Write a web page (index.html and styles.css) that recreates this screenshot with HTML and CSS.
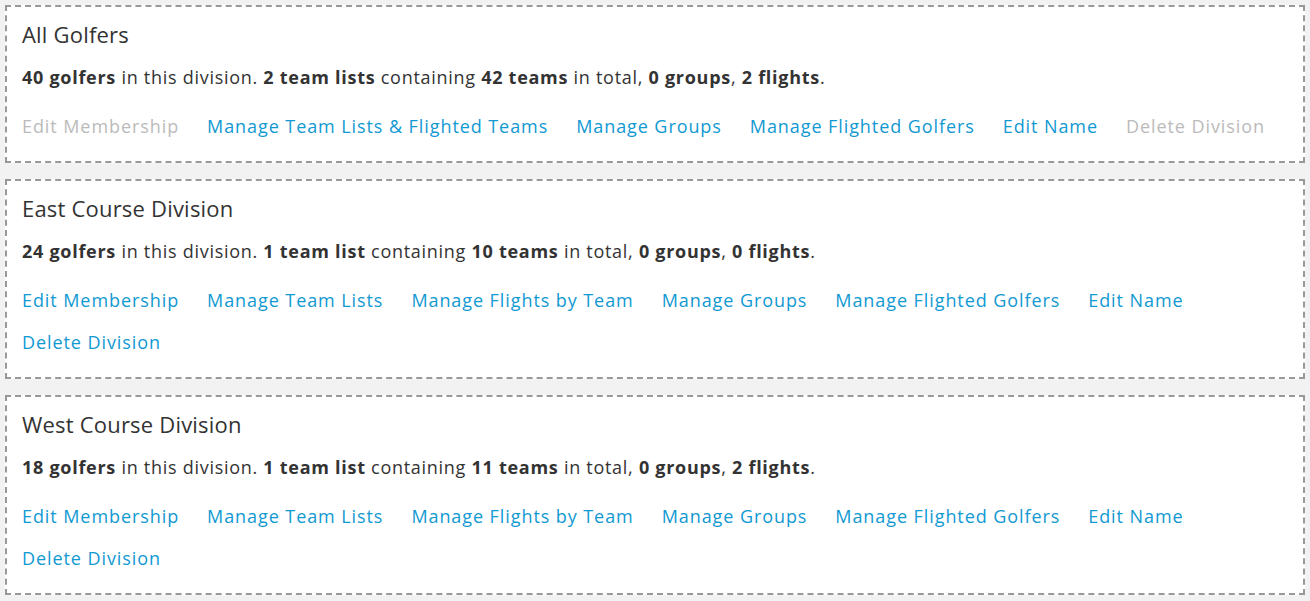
FILE: index.html
```html
<!DOCTYPE html>
<html>
<head>
<meta charset="utf-8">
<link rel="stylesheet" href="styles.css">
</head>
<body>
<div class="divisions">
  <section class="card">
    <h2 class="title">All Golfers</h2>
    <p class="stats"><b>40 golfers</b> in this division. <b>2 team lists</b> containing <b>42 teams</b> in total, <b>0 groups</b>, <b>2 flights</b>.</p>
    <nav class="links">
      <span class="link disabled">Edit Membership</span>
      <a class="link" href="#">Manage Team Lists &amp; Flighted Teams</a>
      <a class="link" href="#">Manage Groups</a>
      <a class="link" href="#">Manage Flighted Golfers</a>
      <a class="link" href="#">Edit Name</a>
      <span class="link disabled">Delete Division</span>
    </nav>
  </section>
  <section class="card">
    <h2 class="title">East Course Division</h2>
    <p class="stats"><b>24 golfers</b> in this division. <b>1 team list</b> containing <b>10 teams</b> in total, <b>0 groups</b>, <b>0 flights</b>.</p>
    <nav class="links">
      <a class="link" href="#">Edit Membership</a>
      <a class="link" href="#">Manage Team Lists</a>
      <a class="link" href="#">Manage Flights by Team</a>
      <a class="link" href="#">Manage Groups</a>
      <a class="link" href="#">Manage Flighted Golfers</a>
      <a class="link" href="#">Edit Name</a>
      <a class="link" href="#">Delete Division</a>
    </nav>
  </section>
  <section class="card">
    <h2 class="title">West Course Division</h2>
    <p class="stats"><b>18 golfers</b> in this division. <b>1 team list</b> containing <b>11 teams</b> in total, <b>0 groups</b>, <b>2 flights</b>.</p>
    <nav class="links">
      <a class="link" href="#">Edit Membership</a>
      <a class="link" href="#">Manage Team Lists</a>
      <a class="link" href="#">Manage Flights by Team</a>
      <a class="link" href="#">Manage Groups</a>
      <a class="link" href="#">Manage Flighted Golfers</a>
      <a class="link" href="#">Edit Name</a>
      <a class="link" href="#">Delete Division</a>
    </nav>
  </section>
</div>
</body>
</html>
```
FILE: styles.css
```css
html, body {
  margin: 0;
  padding: 0;
  background: #f2f2f2;
}
body {
  padding: 5px;
  font-family: "Open Sans", "Liberation Sans", sans-serif;
  color: #333;
}
.divisions {
  display: flex;
  flex-direction: column;
  gap: 16px;
  width: 1300px;
}
.card {
  background: #fff;
  border: 2px dashed #999;
  padding: 13px 15px 14px;
}
.title {
  margin: 0;
  font-size: 22px;
  line-height: 28px;
  font-weight: 400;
  letter-spacing: 0.2px;
  color: #333;
}
.stats {
  margin: 16px 0 15px;
  font-size: 18px;
  line-height: 26px;
  letter-spacing: 0.72px;
}
.stats b {
  font-weight: 700;
}
.links {
  display: flex;
  flex-wrap: wrap;
  column-gap: 28px;
  row-gap: 0;
}
.link {
  font-size: 18px;
  line-height: 42px;
  letter-spacing: 0.92px;
  color: #1199d2;
  text-decoration: none;
}
.link.disabled {
  color: #bbb;
}
```
